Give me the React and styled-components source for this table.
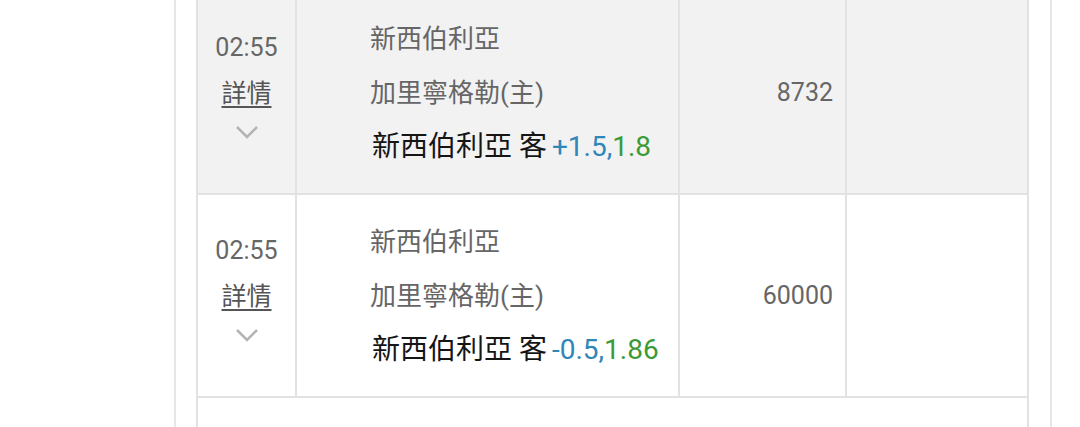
import React from "react";
import styled, { createGlobalStyle } from "styled-components";

const GlobalStyle = createGlobalStyle`
  html, body {
    margin: 0;
    padding: 0;
    height: 427px;
    overflow: hidden;
    background: #fff;
    font-family: Roboto, "Noto Sans CJK TC", "Noto Sans", sans-serif;
  }
`;

const matches = [
  { time: "02:55", home: "新西伯利亞", away: "加里寧格勒(主)", pick: "新西伯利亞 客", line: "+1.5,", odds: "1.8", amount: "8732", shaded: true },
  { time: "02:55", home: "新西伯利亞", away: "加里寧格勒(主)", pick: "新西伯利亞 客", line: "-0.5,", odds: "1.86", amount: "60000", shaded: false },
];

const Panel = styled.div`
  box-sizing: border-box;
  margin-left: 174px;
  width: 878px;
  height: 427px;
  overflow: hidden;
  border-left: 2px solid #e6e6e6;
  border-right: 2px solid #e6e6e6;
  padding: 0 21px 0 20px;
`;

const Table = styled.div`
  margin-top: -8px;
  border-left: 2px solid #e2e2e2;
  border-right: 2px solid #e2e2e2;
`;

const Row = styled.div`
  display: grid;
  grid-template-columns: 99px 383px 167px 180px;
  height: 203px;
  box-sizing: border-box;
  border-bottom: 2px solid #e2e2e2;
  background: ${(p) => (p.$shaded ? "#f2f2f2" : "#fff")};
`;

const Cell = styled.div`
  box-sizing: border-box;
  border-right: ${(p) => (p.$last ? "none" : "2px solid #e2e2e2")};
  display: flex;
  flex-direction: column;
  justify-content: center;
`;

const TimeCell = styled(Cell)`
  align-items: center;
  padding-bottom: 14px;
`;

const Time = styled.div`
  font-size: 25px;
  line-height: 30px;
  color: #666;
  margin-bottom: 16px;
`;

const Detail = styled.a`
  font-size: 25px;
  line-height: 30px;
  color: #555;
  text-decoration: underline;
  text-underline-offset: 4px;
  text-decoration-thickness: 1.5px;
`;

const Chevron = styled.svg`
  margin-top: 16px;
  width: 24px;
  height: 14px;
`;

const TeamCell = styled(Cell)`
  padding-left: 73px;
`;

const Team = styled.div`
  font-size: 26px;
  line-height: 54px;
  color: #666;
  white-space: nowrap;
`;

const Pick = styled.div`
  font-size: 28px;
  line-height: 54px;
  color: #151515;
  white-space: nowrap;
  margin-left: 2px;
`;

const Handicap = styled.span`
  color: #2f86b8;
  margin-left: 5px;
`;

const Odds = styled.span`
  color: #3c9a35;
`;

const AmountCell = styled(Cell)`
  align-items: flex-end;
  padding-right: 12px;
  font-size: 25px;
  color: #666;
`;

const Spacer = styled.div`
  height: 60px;
`;

const App = () => {
  return (
    <>
      <GlobalStyle />
      <Panel>
        <Table>
          {matches.map((m, i) => (
            <Row key={i} $shaded={m.shaded}>
              <TimeCell>
                <Time>{m.time}</Time>
                <Detail>詳情</Detail>
                <Chevron viewBox="0 0 24 14">
                  <polyline points="2,2 12,12 22,2" fill="none" stroke="#b4b4b4" strokeWidth="2.5" />
                </Chevron>
              </TimeCell>
              <TeamCell>
                <Team>{m.home}</Team>
                <Team>{m.away}</Team>
                <Pick>
                  {m.pick}
                  <Handicap>{m.line}</Handicap>
                  <Odds>{m.odds}</Odds>
                </Pick>
              </TeamCell>
              <AmountCell>{m.amount}</AmountCell>
              <Cell $last />
            </Row>
          ))}
          <Spacer />
        </Table>
      </Panel>
    </>
  );
};

export default App;
